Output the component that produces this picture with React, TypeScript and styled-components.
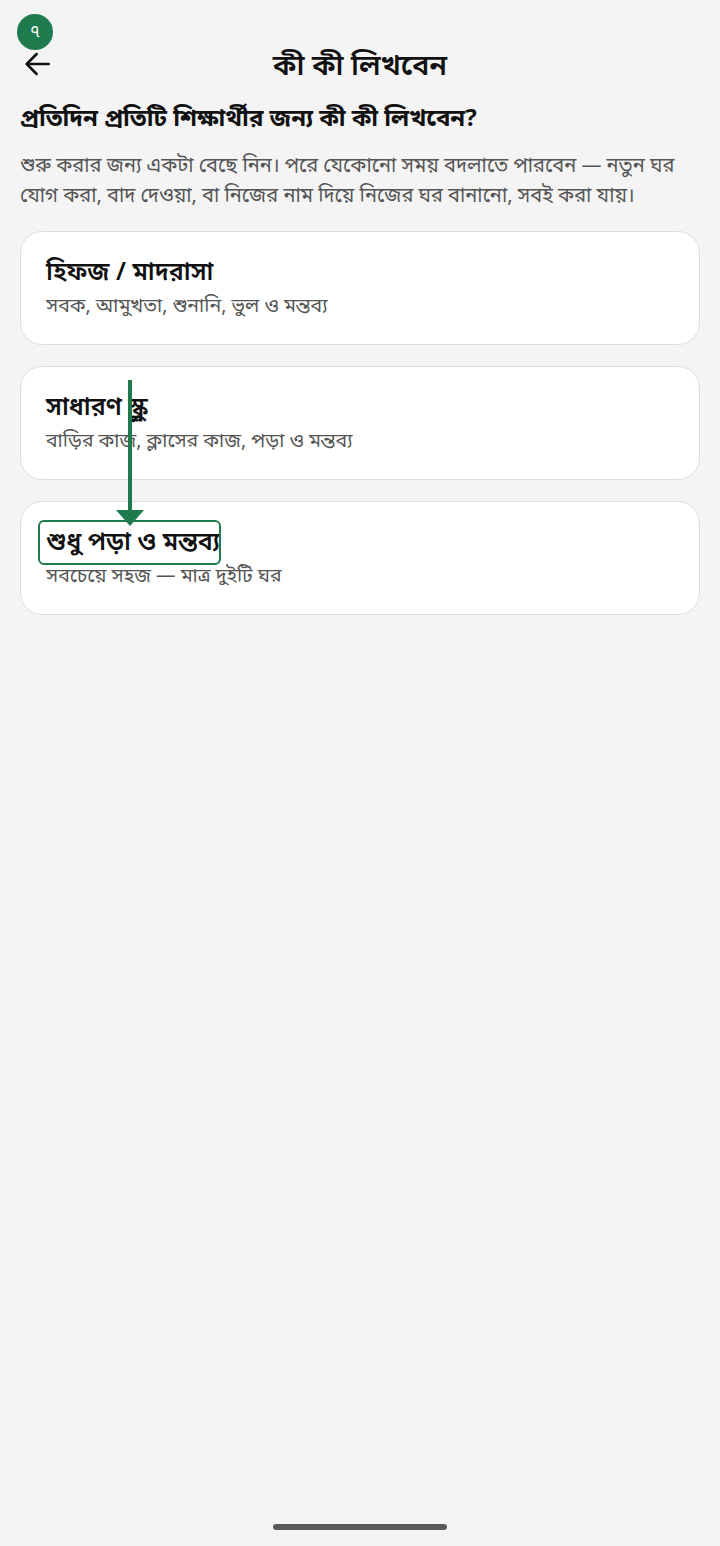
import React from "react";
import styled, { createGlobalStyle } from "styled-components";

const Global = createGlobalStyle`
  html, body { margin: 0; padding: 0; background: #f4f4f4; }
  body { font-family: "Noto Sans", "Noto Sans Bengali", sans-serif; color: #111; }
  * { box-sizing: border-box; }
`;

const Page = styled.div`
  position: relative;
  width: 720px;
  height: 1546px;
  background: #f4f4f4;
  display: flex;
  flex-direction: column;
  overflow: hidden;
`;

const Header = styled.header`
  height: 88px;
  padding-top: 40px;
  display: grid;
  grid-template-columns: 72px 1fr 72px;
  align-items: center;
`;

const BackButton = styled.button`
  background: none;
  border: none;
  padding: 0 0 0 22px;
  height: 48px;
  display: flex;
  align-items: center;
  color: #111;
  cursor: pointer;
`;

const Title = styled.h1`
  margin: 0;
  text-align: center;
  font-size: 29px;
  font-weight: 600;
  line-height: 48px;
  color: #111;
`;

const Content = styled.main`
  padding: 12px 20px 0;
  display: flex;
  flex-direction: column;
`;

const Heading = styled.h2`
  margin: 0;
  font-size: 24px;
  font-weight: 700;
  line-height: 34px;
  color: #111;
`;

const Intro = styled.p`
  margin: 16px 0 0;
  font-size: 20px;
  line-height: 30px;
  color: #555;
`;

const List = styled.div`
  display: flex;
  flex-direction: column;
  gap: 21px;
  margin-top: 21px;
`;

const Card = styled.button`
  display: flex;
  flex-direction: column;
  align-items: flex-start;
  justify-content: flex-start;
  gap: 6px;
  height: 114px;
  padding: 22px 25px 0;
  background: #fff;
  border: 1.5px solid #dedede;
  border-radius: 22px;
  text-align: left;
  font-family: inherit;
  cursor: pointer;
`;

const CardTitle = styled.span`
  font-size: 25px;
  font-weight: 600;
  color: #111;
  line-height: 32px;
`;

const CardSub = styled.span`
  font-size: 19.5px;
  color: #555;
  line-height: 26px;
`;

const HomeBar = styled.div`
  position: absolute;
  left: 273px;
  bottom: 16px;
  width: 174px;
  height: 6px;
  border-radius: 3px;
  background: #5a5a5a;
`;

const Badge = styled.div`
  position: absolute;
  left: 17px;
  top: 14px;
  width: 36px;
  height: 36px;
  border-radius: 50%;
  background: #1f7a4d;
  color: #fff;
  font-size: 17px;
  line-height: 1;
  padding-bottom: 4px;
  display: flex;
  align-items: center;
  justify-content: center;
`;

const Arrow = styled.svg`
  position: absolute;
  left: 114px;
  top: 378px;
  pointer-events: none;
`;

const Highlight = styled.div`
  position: absolute;
  left: 38px;
  top: 520px;
  width: 183px;
  height: 45px;
  border: 2.5px solid #1f7a4d;
  border-radius: 6px;
  pointer-events: none;
`;

const options = [
  { title: "হিফজ / মাদরাসা", sub: "সবক, আমুখতা, শুনানি, ভুল ও মন্তব্য" },
  { title: "সাধারণ স্কুল", sub: "বাড়ির কাজ, ক্লাসের কাজ, পড়া ও মন্তব্য" },
  { title: "শুধু পড়া ও মন্তব্য", sub: "সবচেয়ে সহজ — মাত্র দুইটি ঘর" },
];

export default function App() {
  return (
    <Page>
      <Global />
      <Header>
        <BackButton aria-label="back">
          <svg width="32" height="32" viewBox="0 0 24 24" fill="none" stroke="#111" strokeWidth="1.9" strokeLinecap="round" strokeLinejoin="round">
            <path d="M20 12H4" />
            <path d="M11 4.5L3.5 12l7.5 7.5" />
          </svg>
        </BackButton>
        <Title>কী কী লিখবেন</Title>
        <div />
      </Header>
      <Content>
        <Heading>প্রতিদিন প্রতিটি শিক্ষার্থীর জন্য কী কী লিখবেন?</Heading>
        <Intro>
          শুরু করার জন্য একটা বেছে নিন। পরে যেকোনো সময় বদলাতে পারবেন — নতুন ঘর যোগ করা, বাদ দেওয়া, বা নিজের নাম দিয়ে নিজের ঘর বানানো, সবই করা যায়।
        </Intro>
        <List>
          {options.map((o) => (
            <Card key={o.title}>
              <CardTitle>{o.title}</CardTitle>
              <CardSub>{o.sub}</CardSub>
            </Card>
          ))}
        </List>
      </Content>
      <HomeBar />
      <Badge>৭</Badge>
      <Arrow width="32" height="150" viewBox="0 0 32 150">
        <line x1="16" y1="2" x2="16" y2="134" stroke="#1f7a4d" strokeWidth="4" />
        <polygon points="2,132 30,132 16,148" fill="#1f7a4d" />
      </Arrow>
      <Highlight />
    </Page>
  );
}
